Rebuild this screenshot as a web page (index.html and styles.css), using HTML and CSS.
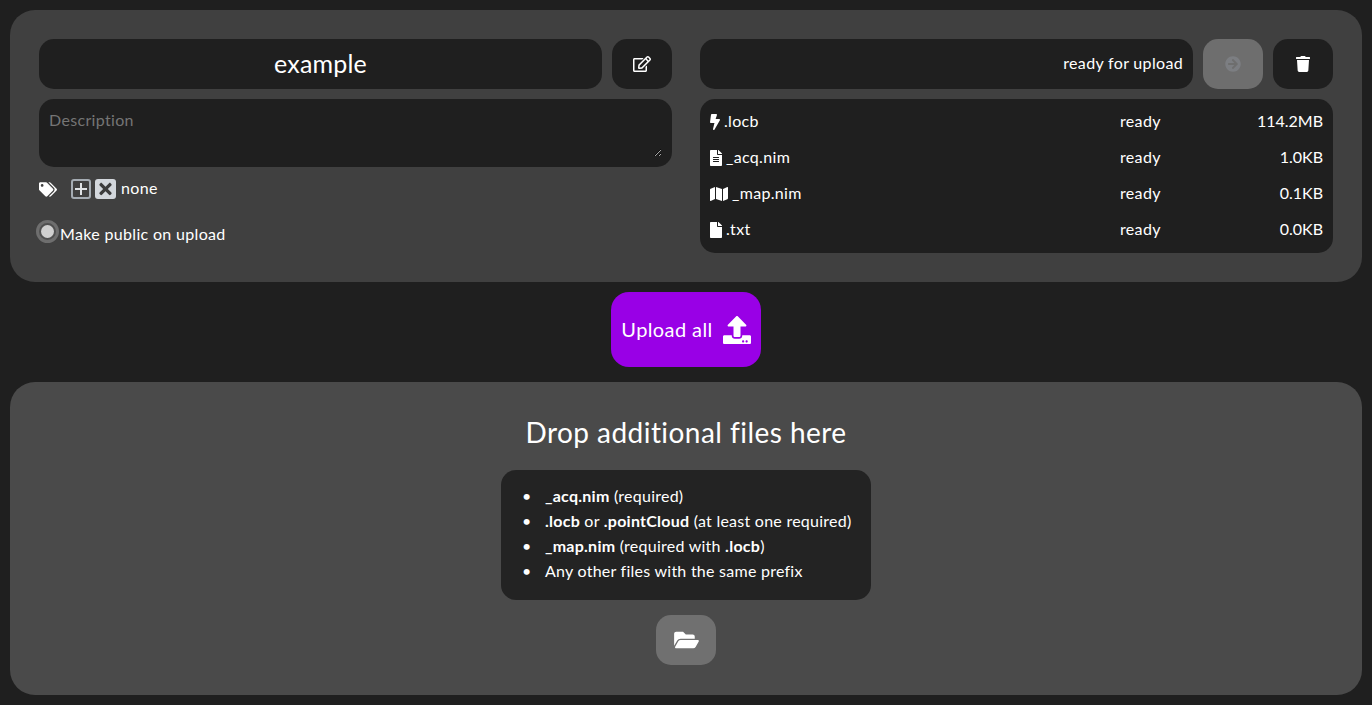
FILE: index.html

```html
<!DOCTYPE html>
<html>
    <head>
        <meta charset="UTF-8">
        <meta name="viewport" content="width=device-width, initial-scale=1.0">
        <link rel="stylesheet" href="styles.css">
        <title>Upload</title>
    </head>
    <body>
        <div class="panel upload-panel">
            <div class="column">
                <div class="row">
                    <input class="name-input" type="text" value="example">
                    <button class="icon-button">
                        <svg class="icon-edit" viewBox="0 0 576 512"><path d="M402.3 344.9l32-32c5-5 13.7-1.5 13.7 5.7V464c0 26.5-21.5 48-48 48H48c-26.5 0-48-21.5-48-48V112c0-26.5 21.5-48 48-48h273.5c7.1 0 10.7 8.6 5.7 13.7l-32 32c-1.5 1.5-3.5 2.3-5.7 2.3H48v352h352V350.5c0-2.1.8-4.1 2.3-5.6zm156.6-201.8L296.3 405.7l-90.4 10c-26.2 2.9-48.5-19.2-45.6-45.6l10-90.4L432.9 17.1c22.9-22.9 59.9-22.9 82.7 0l43.2 43.2c22.9 22.9 22.9 60 .1 82.8zM460.1 174L402 115.9 216.2 301.8l-7.3 65.3 65.3-7.3L460.1 174zm64.8-79.7l-43.2-43.2c-4.1-4.1-10.8-4.1-14.8 0L436 82l58.1 58.1 30.9-30.9c4-4.2 4-10.8-.1-14.8z"/></svg>
                    </button>
                </div>
                <div class="description-box">
                    <textarea class="description" placeholder="Description"></textarea>
                </div>
                <div class="tags">
                    <svg class="icon-tags" viewBox="0 0 640 512"><path d="M497.941 225.941L286.059 14.059A48 48 0 0 0 252.118 0H48C21.49 0 0 21.49 0 48v204.118a48 48 0 0 0 14.059 33.941l211.882 211.882c18.744 18.745 49.136 18.746 67.882 0l204.118-204.118c18.745-18.745 18.745-49.137 0-67.882zM112 160c-26.51 0-48-21.49-48-48s21.49-48 48-48 48 21.49 48 48-21.49 48-48 48zm513.941 133.823L421.823 497.941c-18.745 18.745-49.137 18.745-67.882 0l-.36-.36L527.64 323.522c16.999-16.999 26.36-39.6 26.36-63.64s-9.362-46.641-26.36-63.64L331.397 0h48.721a48 48 0 0 1 33.941 14.059l211.882 211.882c18.745 18.745 18.745 49.137 0 67.882z"/></svg>
                    <span class="tag-button tag-add">
                        <svg viewBox="0 0 12 12"><path d="M5 0h2v5h5v2H7v5H5V7H0V5h5z"/></svg>
                    </span>
                    <span class="tag-button tag-clear">
                        <svg viewBox="0 0 352 512"><path d="M242.72 256l100.07-100.07c12.28-12.28 12.28-32.19 0-44.48l-22.24-22.24c-12.28-12.28-32.19-12.28-44.48 0L176 189.28 75.93 89.21c-12.28-12.28-32.19-12.28-44.48 0L9.21 111.45c-12.28 12.28-12.28 32.19 0 44.48L109.28 256 9.21 356.07c-12.28 12.28-12.28 32.19 0 44.48l22.24 22.24c12.28 12.28 32.2 12.28 44.48 0L176 322.72l100.07 100.07c12.28 12.28 32.2 12.28 44.48 0l22.24-22.24c12.28-12.28 12.28-32.19 0-44.48L242.72 256z"/></svg>
                    </span>
                    <span class="tag-text">none</span>
                </div>
                <label class="public-toggle">
                    <span class="radio"></span>
                    <span class="public-text">Make public on upload</span>
                </label>
            </div>
            <div class="column">
                <div class="row">
                    <div class="status-box">ready for upload</div>
                    <button class="icon-button disabled">
                        <svg class="icon-go" viewBox="0 0 512 512"><path d="M256 8c137 0 248 111 248 248S393 504 256 504 8 393 8 256 119 8 256 8zm-28.9 143.6l75.5 72.4H120c-13.3 0-24 10.7-24 24v16c0 13.3 10.7 24 24 24h182.6l-75.5 72.4c-9.7 9.3-9.9 24.8-.4 34.3l11 10.9c9.4 9.4 24.6 9.4 33.9 0L404.3 273c9.4-9.4 9.4-24.6 0-33.9L271.6 106.3c-9.4-9.4-24.6-9.4-33.9 0l-11 10.9c-9.5 9.6-9.3 25.1.4 34.4z"/></svg>
                    </button>
                    <button class="icon-button">
                        <svg class="icon-trash" viewBox="0 0 448 512"><path d="M432 32H312l-9.4-18.7A24 24 0 0 0 281.1 0H166.8a23.72 23.72 0 0 0-21.4 13.3L136 32H16A16 16 0 0 0 0 48v32a16 16 0 0 0 16 16h416a16 16 0 0 0 16-16V48a16 16 0 0 0-16-16zM53.2 467a48 48 0 0 0 47.9 45h245.8a48 48 0 0 0 47.9-45L416 128H32z"/></svg>
                    </button>
                </div>
                <div class="file-list">
                    <div class="file-name"><svg class="file-icon" viewBox="0 0 320 512"><path d="M296 160H180.6l42.6-129.8C227.2 15 215.7 0 200 0H56C44 0 33.8 8.9 32.2 20.8l-32 240C-1.7 275.2 9.5 288 24 288h118.7L96.6 482.5c-3.6 15.2 8 29.5 23.3 29.5 8.4 0 16.4-4.4 20.8-12l176-304c9.3-15.9-2.2-36-20.7-36z"/></svg>.locb</div>
                    <div>ready</div>
                    <div class="file-size">114.2MB</div>
                    <div class="file-name"><svg class="file-icon" viewBox="0 0 384 512"><path d="M224 136V0H24C10.7 0 0 10.7 0 24v464c0 13.3 10.7 24 24 24h336c13.3 0 24-10.7 24-24V160H248c-13.2 0-24-10.8-24-24zm64 236c0 6.6-5.4 12-12 12H108c-6.6 0-12-5.4-12-12v-8c0-6.6 5.4-12 12-12h168c6.6 0 12 5.4 12 12v8zm0-64c0 6.6-5.4 12-12 12H108c-6.6 0-12-5.4-12-12v-8c0-6.6 5.4-12 12-12h168c6.6 0 12 5.4 12 12v8zm0-72v8c0 6.6-5.4 12-12 12H108c-6.6 0-12-5.4-12-12v-8c0-6.6 5.4-12 12-12h168c6.6 0 12 5.4 12 12zm96-114.1v6.1H256V0h6.1c6.4 0 12.5 2.5 17 7l97.9 98c4.5 4.5 7 10.6 7 16.9z"/></svg>_acq.nim</div>
                    <div>ready</div>
                    <div class="file-size">1.0KB</div>
                    <div class="file-name"><svg class="file-icon" viewBox="0 0 576 512"><path d="M0 117.66v346.32c0 11.32 11.43 19.06 21.94 14.86L160 416V32L20.12 87.95A32.006 32.006 0 0 0 0 117.66zM192 416l192 64V96L192 32v384zM554.06 33.16L416 96v384l139.88-55.95A31.996 31.996 0 0 0 576 394.34V48.02c0-11.32-11.43-19.06-21.94-14.86z"/></svg>_map.nim</div>
                    <div>ready</div>
                    <div class="file-size">0.1KB</div>
                    <div class="file-name"><svg class="file-icon" viewBox="0 0 384 512"><path d="M224 136V0H24C10.7 0 0 10.7 0 24v464c0 13.3 10.7 24 24 24h336c13.3 0 24-10.7 24-24V160H248c-13.2 0-24-10.8-24-24zm160-14.1v6.1H256V0h6.1c6.4 0 12.5 2.5 17 7l97.9 98c4.5 4.5 7 10.6 7 16.9z"/></svg>.txt</div>
                    <div>ready</div>
                    <div class="file-size">0.0KB</div>
                </div>
            </div>
        </div>

        <button class="upload-all">
            <span class="upload-text">Upload all</span>
            <svg viewBox="0 0 512 512"><path d="M296 384h-80c-13.3 0-24-10.7-24-24V192h-87.7c-17.8 0-26.7-21.5-14.1-34.1L242.3 5.7c7.5-7.5 19.8-7.5 27.3 0l152.2 152.2c12.6 12.6 3.7 34.1-14.1 34.1H320v168c0 13.3-10.7 24-24 24zm216-8v112c0 13.3-10.7 24-24 24H24c-13.3 0-24-10.7-24-24V376c0-13.3 10.7-24 24-24h136v8c0 30.9 25.1 56 56 56h80c30.9 0 56-25.1 56-56v-8h136c13.3 0 24 10.7 24 24zm-124 88c0-11-9-20-20-20s-20 9-20 20 9 20 20 20 20-9 20-20zm64 0c0-11-9-20-20-20s-20 9-20 20 9 20 20 20 20-9 20-20z"/></svg>
        </button>

        <div class="panel drop-panel">
            <h2 class="drop-title">Drop additional files here</h2>
            <ul class="drop-list">
                <li><b>_acq.nim</b> (required)</li>
                <li><b>.locb</b> or <b>.pointCloud</b> (at least one required)</li>
                <li><b>_map.nim</b> (required with <b>.locb</b>)</li>
                <li>Any other files with the same prefix</li>
            </ul>
            <button class="icon-button browse">
                <svg class="icon-folder" viewBox="0 0 576 512"><path d="M572.694 292.093L500.27 416.248A63.997 63.997 0 0 1 444.989 448H45.025c-18.523 0-30.064-20.093-20.731-36.093l72.424-124.155A64 64 0 0 1 152 256h399.964c18.523 0 30.064 20.093 20.73 36.093zM152 224h328v-48c0-26.51-21.49-48-48-48H272l-64-64H48C21.49 64 0 85.49 0 112v278.046l69.077-118.418C86.214 242.25 117.989 224 152 224z"/></svg>
            </button>
        </div>
    </body>
</html>
```

FILE: styles.css

```css
* {
    box-sizing: border-box;
}
body {
    margin: 0;
    padding: 10px;
    height: 705px;
    overflow: hidden;
    background: #1f1f1f;
    color: #fff;
    font-family: "Lato", "Open Sans", sans-serif;
    font-size: 16px;
    letter-spacing: 0.33px;
    display: flex;
    flex-direction: column;
    align-items: center;
}
svg {
    display: block;
    fill: currentColor;
}
button {
    border: none;
    padding: 0;
    color: #fff;
    font-family: inherit;
    letter-spacing: inherit;
}
.panel {
    width: 100%;
    border-radius: 25px;
}
.upload-panel {
    height: 272px;
    padding: 29px;
    background: #404040;
    display: grid;
    grid-template-columns: 1fr 1fr;
    column-gap: 28px;
}
.column {
    display: flex;
    flex-direction: column;
    gap: 10px;
    min-width: 0;
}
.row {
    display: flex;
    gap: 10px;
    height: 50px;
}
.name-input {
    flex: 1;
    min-width: 0;
    border: none;
    outline: none;
    border-radius: 15px;
    padding: 0 0 3px;
    background: #1f1f1f;
    color: #fff;
    font-family: inherit;
    font-size: 25px;
    letter-spacing: 0.2px;
    text-align: center;
}
.icon-button {
    width: 60px;
    height: 50px;
    flex: none;
    border-radius: 15px;
    background: #1f1f1f;
    display: flex;
    align-items: center;
    justify-content: center;
}
.icon-button.disabled {
    background: #6e6e6e;
    color: #7c7e82;
}
.icon-edit {
    width: 18px;
    height: 16px;
}
.icon-go {
    width: 16px;
    height: 16px;
}
.icon-trash {
    width: 14px;
    height: 16px;
}
.description-box {
    height: 68px;
    padding: 10px;
    border-radius: 15px;
    background: #1f1f1f;
}
.description {
    display: block;
    width: 100%;
    height: 48px;
    padding: 1px 0 0;
    border: none;
    outline: none;
    background: transparent;
    color: #fff;
    color-scheme: dark;
    font-family: inherit;
    font-size: 16px;
    letter-spacing: inherit;
}
.description::placeholder {
    color: #757575;
}
.tags {
    display: flex;
    align-items: center;
    height: 22px;
    margin-top: 1px;
}
.icon-tags {
    width: 18px;
    height: 15px;
    margin-right: 14px;
}
.tag-button {
    height: 20px;
    margin-right: 4px;
    border-radius: 3px;
    display: flex;
    align-items: center;
    justify-content: center;
}
.tag-add {
    width: 20px;
    border: 2px solid #a5acb3;
    color: #dfe2e5;
}
.tag-add svg {
    width: 12px;
    height: 12px;
}
.tag-clear {
    width: 21px;
    margin-right: 5px;
    background: #d3d7dc;
    color: #3c3c3c;
}
.tag-clear svg {
    width: 13px;
    height: 18px;
}
.tag-text {
    padding-bottom: 4px;
}
.public-toggle {
    display: flex;
    align-items: center;
    margin: 12px 0 0 -3px;
    height: 24px;
}
.public-text {
    padding-bottom: 1px;
}
.radio {
    width: 23px;
    height: 23px;
    margin-right: 1px;
    margin-top: -5px;
    border: 3px solid #6e6e6e;
    border-radius: 50%;
    background: #505050;
    position: relative;
    flex: none;
}
.radio::after {
    content: "";
    position: absolute;
    left: 2px;
    top: 2px;
    width: 13px;
    height: 13px;
    border-radius: 50%;
    background: #d0d0d0;
}
.status-box {
    flex: 1;
    min-width: 0;
    border-radius: 15px;
    padding: 0 10px 4px 0;
    background: #1f1f1f;
    display: flex;
    align-items: center;
    justify-content: flex-end;
}
.file-list {
    height: 154px;
    padding: 3px 10px 7px;
    border-radius: 15px;
    background: #1f1f1f;
    display: grid;
    grid-template-columns: 410px 1fr auto;
    grid-auto-rows: 36px;
    align-items: center;
}
.file-name {
    display: flex;
    align-items: center;
    gap: 4px;
}
.file-size {
    text-align: right;
    letter-spacing: 0;
}
.file-icon {
    height: 16px;
    width: auto;
    margin-top: 4px;
}
.upload-all {
    width: 150px;
    height: 75px;
    flex: none;
    margin: 10px 0 15px;
    border-radius: 18px;
    background: #9900e6;
    font-size: 20px;
    letter-spacing: 0.4px;
    display: flex;
    align-items: center;
    justify-content: center;
    gap: 10px;
}
.upload-text {
    padding-bottom: 2px;
}
.upload-all svg {
    width: 28px;
    height: 28px;
}
.drop-panel {
    height: 313px;
    background: #4a4a4a;
    display: flex;
    flex-direction: column;
    align-items: center;
}
.drop-title {
    margin: 31px 0 0;
    font-size: 28px;
    line-height: 38px;
    font-weight: 400;
    letter-spacing: 0.45px;
}
.drop-list {
    width: 370px;
    height: 130px;
    margin: 19px 0 15px;
    padding: 13px 10px 0 44px;
    border-radius: 15px;
    background: #232323;
    line-height: 25px;
    letter-spacing: 0.25px;
    list-style: none;
}
.drop-list li::before {
    content: "•";
    display: inline-block;
    width: 23px;
    margin-left: -23px;
    font-size: 16px;
}
.browse {
    background: #707070;
}
.icon-folder {
    width: 25px;
    height: 22px;
}
```
